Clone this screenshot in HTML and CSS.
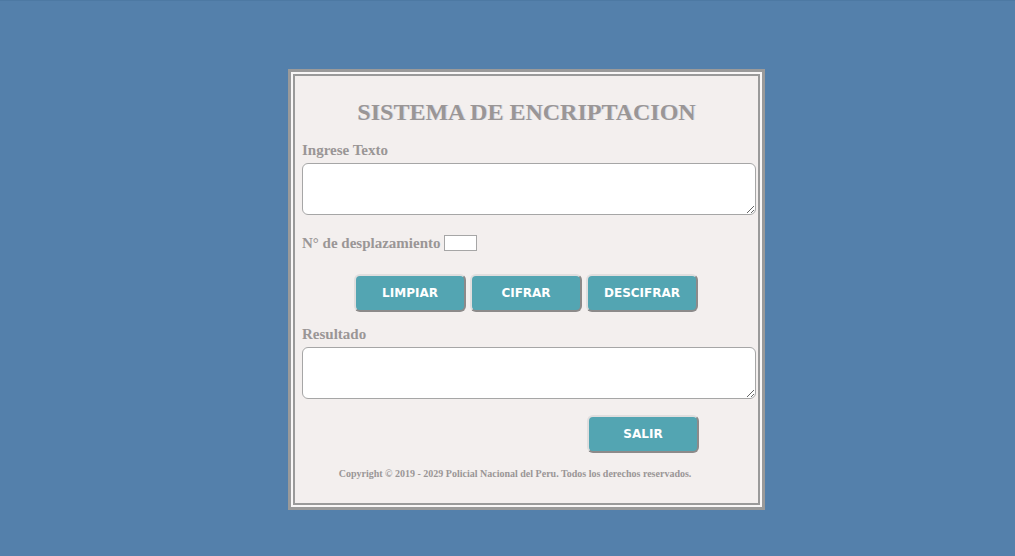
FILE: index.html
```html
<!DOCTYPE html>
<html lang="es">
<head>
<meta charset="utf-8">
<title>Sistema de Encriptacion</title>
<link rel="stylesheet" href="styles.css">
</head>
<body>
<div class="frame">
  <div class="panel">
    <h1 class="title">SISTEMA DE ENCRIPTACION</h1>
    <label class="label" for="texto">Ingrese Texto</label>
    <textarea id="texto" class="area"></textarea>
    <div class="shift">
      <label class="label" for="desp">N° de desplazamiento</label>
      <input id="desp" class="num" type="text">
    </div>
    <div class="actions">
      <button class="btn">LIMPIAR</button>
      <button class="btn">CIFRAR</button>
      <button class="btn">DESCIFRAR</button>
    </div>
    <label class="label" for="res">Resultado</label>
    <textarea id="res" class="area"></textarea>
    <div class="exit">
      <button class="btn">SALIR</button>
    </div>
    <p class="copy">Copyright © 2019 - 2029 Policial Nacional del Peru. Todos los derechos reservados.</p>
  </div>
</div>
</body>
</html>
```
FILE: styles.css
```css
html, body {
  margin: 0;
  padding: 0;
}
body {
  background: #5480ab;
  border-top: 1px solid #4d79a3;
  height: 555px;
  font-family: "Liberation Serif", "Times New Roman", serif;
}
.frame {
  width: 467px;
  margin: 68px 0 0 288px;
  border: 3px solid #9a9a9a;
  padding: 2px;
  background: #f9f7f7;
  box-sizing: content-box;
}
.panel {
  border: 2px solid #9a9a9a;
  background: #f3efee;
  padding: 0 0 0 7px;
  height: 427px;
  display: flex;
  flex-direction: column;
  align-items: flex-start;
}
.title {
  align-self: stretch;
  text-align: center;
  margin: 21px 0 0 0;
  padding-right: 7px;
  font-size: 24px;
  font-weight: bold;
  color: #9a9696;
  line-height: 30px;
  text-shadow: 1px 0 0 rgba(120, 150, 200, 0.25);
}
.label {
  font-size: 15px;
  font-weight: bold;
  color: #9a9696;
  line-height: 18px;
}
.title + .label {
  margin-top: 14px;
}
.area {
  width: 454px;
  height: 52px;
  box-sizing: border-box;
  margin: 4px 0 0 0;
  border: 1px solid #a6a6a6;
  border-radius: 6px;
  background: #fff;
  padding: 2px;
  font-family: inherit;
}
.shift {
  display: flex;
  align-items: center;
  gap: 3px;
  margin-top: 19px;
}
.num {
  width: 33px;
  height: 16px;
  box-sizing: border-box;
  border: 1px solid #a6a6a6;
  background: #fff;
  padding: 0;
  margin: 0;
}
.actions {
  align-self: stretch;
  display: flex;
  justify-content: center;
  gap: 4px;
  margin: 22px 0 0 -8px;
}
.btn {
  width: 112px;
  height: 38px;
  box-sizing: border-box;
  background: #53a5b2;
  color: #fff;
  font-family: "DejaVu Sans", Verdana, sans-serif;
  font-weight: bold;
  font-size: 12px;
  border: 2px solid;
  border-color: #e0dede #8c8a8a #8c8a8a #e0dede;
  border-radius: 6px;
  padding: 0;
}
.actions + .label {
  margin-top: 13px;
}
.exit {
  align-self: stretch;
  display: flex;
  justify-content: flex-end;
  margin: 16px 0 0 0;
  padding-right: 59px;
}
.copy {
  align-self: stretch;
  text-align: center;
  margin: 15px 0 0 0;
  padding-right: 30px;
  font-size: 10px;
  font-weight: bold;
  color: #9a9696;
}
```
